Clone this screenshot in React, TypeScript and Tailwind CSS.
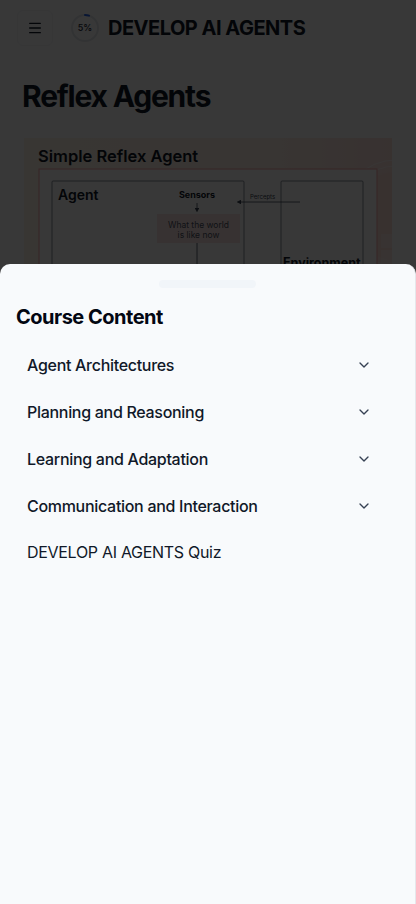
import { Menu, ChevronDown } from "lucide-react";

const modules = [
  "Agent Architectures",
  "Planning and Reasoning",
  "Learning and Adaptation",
  "Communication and Interaction",
];

function ProgressRing({ value }: { value: number }) {
  const r = 13;
  const c = 2 * Math.PI * r;
  return (
    <div className="relative w-[30px] h-[30px] flex items-center justify-center">
      <svg width="30" height="30" viewBox="0 0 30 30" className="absolute inset-0 -rotate-90">
        <circle cx="15" cy="15" r={r} fill="none" stroke="#e5e7eb" strokeWidth="2" />
        <circle
          cx="15"
          cy="15"
          r={r}
          fill="none"
          stroke="#2563eb"
          strokeWidth="2"
          strokeDasharray={`${(value / 100) * c} ${c}`}
          strokeLinecap="round"
        />
      </svg>
      <span className="relative text-[9px] font-medium text-gray-800">{value}%</span>
    </div>
  );
}

function ReflexDiagram() {
  return (
    <svg width="368" height="200" viewBox="0 0 368 200" className="block">
      <defs>
        <linearGradient id="cardBg" x1="0" y1="0" x2="1" y2="0">
          <stop offset="0" stopColor="#fff4e6" />
          <stop offset="0.7" stopColor="#ffefe6" />
          <stop offset="1" stopColor="#ffe1dc" />
        </linearGradient>
        <marker id="arr" markerWidth="6" markerHeight="6" refX="3" refY="3" orient="auto">
          <path d="M0,0 L6,3 L0,6 z" fill="#374151" />
        </marker>
      </defs>
      <rect x="0" y="0" width="368" height="200" fill="url(#cardBg)" />
      <circle cx="372" cy="78" r="56" fill="none" stroke="#ffffff" strokeOpacity="0.6" />
      <circle cx="372" cy="78" r="50" fill="none" stroke="#ffffff" strokeOpacity="0.5" />
      <circle cx="372" cy="78" r="44" fill="#ffd9d2" fillOpacity="0.5" />
      <text x="14" y="24" fontSize="16.5" fontWeight="600" fill="#111827" fontFamily="Inter, sans-serif">
        Simple Reflex Agent
      </text>
      <rect x="15" y="31" width="338" height="180" fill="#ffffff" stroke="#f2a7a7" strokeWidth="1" />
      <rect x="28" y="43" width="192" height="180" fill="none" stroke="#6b7280" strokeWidth="0.8" rx="1" />
      <rect x="257" y="43" width="82" height="180" fill="none" stroke="#6b7280" strokeWidth="0.8" rx="1" />
      <text x="34" y="62" fontSize="14" fontWeight="600" fill="#111827" fontFamily="Inter, sans-serif">
        Agent
      </text>
      <text x="173" y="60" fontSize="9" fontWeight="700" fill="#111827" textAnchor="middle" fontFamily="Inter, sans-serif">
        Sensors
      </text>
      <line x1="173" y1="65" x2="173" y2="72" stroke="#374151" strokeWidth="0.8" markerEnd="url(#arr)" />
      <rect x="133" y="76" width="83" height="29" fill="#fbe3e3" />
      <text x="174.5" y="89.5" fontSize="8.5" fill="#4b5563" textAnchor="middle" fontFamily="Inter, sans-serif">
        What the world
      </text>
      <text x="174.5" y="99.5" fontSize="8.5" fill="#4b5563" textAnchor="middle" fontFamily="Inter, sans-serif">
        is like now
      </text>
      <line x1="173" y1="105" x2="173" y2="200" stroke="#374151" strokeWidth="0.8" />
      <line x1="276" y1="64" x2="215" y2="64" stroke="#374151" strokeWidth="0.8" markerEnd="url(#arr)" />
      <text x="226" y="61" fontSize="6" fill="#374151" fontFamily="Inter, sans-serif">
        Percepts
      </text>
      <text x="259" y="129" fontSize="12.5" fontWeight="700" fill="#111827" fontFamily="Inter, sans-serif">
        Environment
      </text>
      <rect x="357" y="96" width="11" height="14" fill="#ffffff" fillOpacity="0.3" />
      <rect x="357" y="112" width="11" height="14" fill="#ffffff" fillOpacity="0.3" />
    </svg>
  );
}

export default function App() {
  return (
    <div className="relative min-h-screen h-[904px] overflow-hidden bg-white font-['Inter',sans-serif] text-gray-900">
      {/* Page */}
      <div className="flex items-center pt-[10px] pl-[17px]">
        <button className="w-9 h-9 rounded-md border border-gray-100 flex items-center justify-center">
          <Menu className="w-4 h-4 text-gray-900" />
        </button>
        <div className="ml-[17px]">
          <ProgressRing value={5} />
        </div>
        <h2 className="ml-[8px] text-xl font-bold tracking-tight">DEVELOP AI AGENTS</h2>
      </div>

      <div className="px-5">
        <h1 className="mt-[32px] ml-[2px] text-3xl font-bold tracking-[-1.2px]">Reflex Agents</h1>
        <div className="mt-6 ml-1 w-[368px] overflow-hidden">
          <ReflexDiagram />
        </div>
      </div>

      {/* Overlay */}
      <div className="fixed inset-0 bg-black/[0.78]" />

      {/* Drawer */}
      <div className="fixed left-0 right-0 bottom-0 top-[264px] bg-slate-50 rounded-t-[10px] border-r border-gray-200 flex flex-col">
        <div className="mx-auto mt-4 h-2 w-[97px] rounded-full bg-slate-100" />
        <h3 className="pt-[15px] pl-4 text-xl font-bold tracking-tight text-gray-950">Course Content</h3>
        <div className="mt-[11px] px-4">
          {modules.map((m) => (
            <div key={m} className="h-[46.75px] flex items-center justify-between pl-[11px] pr-[27px]">
              <span className="text-base font-medium tracking-[-0.3px] text-gray-900">{m}</span>
              <ChevronDown className="w-4 h-4 text-gray-700" />
            </div>
          ))}
          <div className="h-[46.75px] flex items-center pl-[11px]">
            <span className="text-base tracking-[-0.3px] text-gray-900">DEVELOP AI AGENTS Quiz</span>
          </div>
        </div>
      </div>
    </div>
  );
}
